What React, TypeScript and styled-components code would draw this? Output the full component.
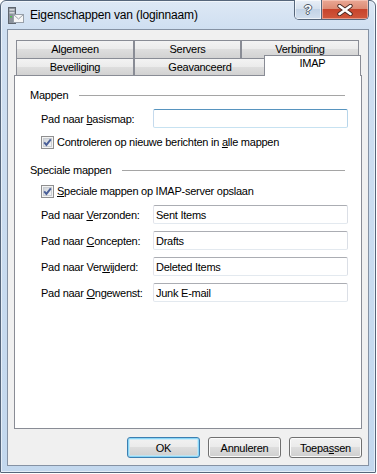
import React from 'react';
import styled, {createGlobalStyle, css} from 'styled-components';

const FONT = `"Liberation Sans", Arial, sans-serif`;

const fields = [
  {pre: 'Pad naar ', key: 'V', post: 'erzonden:', value: 'Sent Items'},
  {pre: 'Pad naar ', key: 'C', post: 'oncepten:', value: 'Drafts'},
  {pre: 'Pad naar Ver', key: 'w', post: 'ijderd:', value: 'Deleted Items'},
  {pre: 'Pad naar ', key: 'O', post: 'ngewenst:', value: 'Junk E-mail'},
];

function AppIcon() {
  return (
    <IconSvg width="16" height="17" viewBox="0 0 16 17">
      <rect x="0.5" y="0.5" width="7" height="16" fill="#8c939c" stroke="#5f666f" />
      <rect x="1.5" y="2" width="5" height="1.5" fill="#d5d9de" />
      <rect x="1.5" y="5" width="5" height="1.5" fill="#d5d9de" />
      <rect x="2" y="9" width="2" height="1.5" fill="#4fbf4a" />
      <rect x="5.5" y="7.5" width="10" height="8" fill="#f6f6f6" stroke="#98a0aa" />
      <path d="M5.5 7.5 L10.5 12 L15.5 7.5" fill="none" stroke="#98a0aa" />
    </IconSvg>
  );
}

function CheckBox() {
  return (
    <CheckSvg width="13" height="13" viewBox="0 0 13 13">
      <defs>
        <linearGradient id="cbFill" x1="0" y1="0" x2="1" y2="1">
          <stop offset="0" stopColor="#cdd1d6" />
          <stop offset="1" stopColor="#f8f8f8" />
        </linearGradient>
      </defs>
      <rect x="0.5" y="0.5" width="12" height="12" fill="#f4f4f4" stroke="#8f8f8f" />
      <rect x="2.5" y="2.5" width="8" height="8" fill="url(#cbFill)" stroke="#c9cdd2" />
      <path d="M3.2 6.4 L5.4 8.9 L9.8 3.4" fill="none" stroke="#4a5f98" strokeWidth="1.9" />
    </CheckSvg>
  );
}

function App() {
  return (
    <>
      <GlobalStyle />
      <Window>
        <TitleBar>
          <AppIcon />
          <Title>Eigenschappen van (loginnaam)</Title>
          <Controls>
            <HelpButton>?</HelpButton>
            <CloseButton>
              <svg width="16" height="12" viewBox="0 0 16 12">
                <path d="M2.5 2 L13.5 10 M13.5 2 L2.5 10" stroke="#4a2a24" strokeWidth="4.4" strokeLinecap="round" />
                <path d="M2.5 2 L13.5 10 M13.5 2 L2.5 10" stroke="#ffffff" strokeWidth="2.6" strokeLinecap="round" />
              </svg>
            </CloseButton>
          </Controls>
        </TitleBar>

        <Client>
          <TabRow $cols="118px 107px 1fr" $h={18}>
            <Tab>Algemeen</Tab>
            <Tab>Servers</Tab>
            <Tab>Verbinding</Tab>
          </TabRow>
          <TabRow $cols="118px 132px 1fr" $h={17}>
            <Tab>Beveiliging</Tab>
            <Tab>Geavanceerd</Tab>
            <Tab $selected>IMAP</Tab>
          </TabRow>

          <Pane>
            <GroupHeader>
              Mappen
              <GroupLine />
            </GroupHeader>
            <FieldRow $mt={7}>
              <FieldLabel>Pad naar <Key>b</Key>asismap:</FieldLabel>
              <TextBox $focus readOnly value="" />
            </FieldRow>
            <CheckRow $mt={8}>
              <CheckBox />
              <span>Controleren op nieuwe berichten in <Key>a</Key>lle mappen</span>
            </CheckRow>

            <GroupHeader style={{marginTop: 14}}>
              Speciale mappen
              <GroupLine />
            </GroupHeader>
            <CheckRow $mt={8}>
              <CheckBox />
              <span><Key>S</Key>peciale mappen op IMAP-server opslaan</span>
            </CheckRow>
            {fields.map((f, i) => (
              <FieldRow key={i} $mt={7}>
                <FieldLabel>{f.pre}<Key>{f.key}</Key>{f.post}</FieldLabel>
                <TextBox readOnly value={f.value} />
              </FieldRow>
            ))}
          </Pane>

          <ButtonRow>
            <Button $default>OK</Button>
            <Button>Annuleren</Button>
            <Button>Toepa<Key>s</Key>sen</Button>
          </ButtonRow>
        </Client>
      </Window>
    </>
  );
}

export default App;

const GlobalStyle = createGlobalStyle`
  html, body {
    margin: 0;
    background: #ffffff;
  }
  body {
    font-family: ${FONT};
  }
`;

const Window = styled.div`
  box-sizing: border-box;
  width: 376px;
  height: 473px;
  border: 1px solid #56667b;
  border-radius: 6px 6px 1px 1px;
  background: linear-gradient(to bottom, #dde8f5 0px, #cfdff1 28px, #c3d8ee 100%);
  box-shadow: inset 0 0 0 1px rgba(255, 255, 255, 0.55);
  padding: 0 6px 6px 6px;
  display: flex;
  flex-direction: column;
`;

const TitleBar = styled.div`
  height: 28px;
  display: flex;
  align-items: flex-start;
`;

const IconSvg = styled.svg`
  margin: 6px 0 0 1px;
  flex-shrink: 0;
`;

const Title = styled.div`
  margin-left: 6px;
  line-height: 28px;
  font-size: 12px;
  letter-spacing: -0.15px;
  color: #000000;
`;

const Controls = styled.div`
  margin-left: auto;
  margin-top: -1px;
  display: flex;
  height: 19px;
  border: 1px solid #56667b;
  border-top: none;
  border-radius: 0 0 5px 5px;
  overflow: hidden;
`;

const HelpButton = styled.div`
  width: 26px;
  display: flex;
  align-items: center;
  justify-content: center;
  border-right: 1px solid #56667b;
  background: linear-gradient(to bottom, #e9eff7 0%, #d6e1ee 45%, #c3d3e6 50%, #d2dfee 100%);
  box-shadow: inset 0 0 0 1px rgba(255, 255, 255, 0.6);
  font: bold 13px ${FONT};
  color: #ffffff;
  text-shadow: 1px 0 #4d5866, -1px 0 #4d5866, 0 1px #4d5866, 0 -1px #4d5866;
`;

const CloseButton = styled.div`
  width: 46px;
  display: flex;
  align-items: center;
  justify-content: center;
  background: linear-gradient(to bottom, #eaa895 0%, #dd8c75 45%, #c7442c 50%, #d0583c 100%);
  box-shadow: inset 0 0 0 1px rgba(255, 220, 210, 0.5);
`;

const Client = styled.div`
  flex: 1;
  border: 1px solid #8592a4;
  background: #f0f0f0;
  padding: 10px 6px 7px 6px;
  display: flex;
  flex-direction: column;
`;

const TabRow = styled.div<{$cols: string; $h: number}>`
  display: grid;
  grid-template-columns: ${p => p.$cols};
  height: ${p => p.$h}px;
  padding: 0 3px 0 2px;
`;

const Tab = styled.div<{$selected?: boolean}>`
  box-sizing: border-box;
  border: 1px solid #898c95;
  border-bottom: none;
  background: linear-gradient(to bottom, #f3f3f3 0%, #ebebeb 50%, #dedede 50%, #d2d2d2 100%);
  display: flex;
  align-items: center;
  justify-content: center;
  font-size: 11px;
  line-height: 13px;
  letter-spacing: -0.25px;
  color: #000000;
  ${p => p.$selected && css`
    background: #ffffff;
    margin: -3px -2px -1px -2px;
    position: relative;
    z-index: 1;
    align-items: flex-start;
    padding-top: 1px;
  `}
`;

const Pane = styled.div`
  flex: 1;
  background: #ffffff;
  border: 1px solid #898c95;
  padding: 12px 13px 0 15px;
  display: flex;
  flex-direction: column;
  font-size: 11px;
  letter-spacing: -0.25px;
  color: #000000;
`;

const GroupHeader = styled.div`
  height: 14px;
  line-height: 14px;
  display: flex;
  align-items: center;
`;

const GroupLine = styled.div`
  flex: 1;
  height: 1px;
  background: #a5a5a5;
  margin: 0 3px 0 11px;
`;

const FieldRow = styled.div<{$mt: number}>`
  margin-top: ${p => p.$mt}px;
  padding-left: 11px;
  height: 19px;
  display: flex;
  align-items: center;
`;

const FieldLabel = styled.div`
  width: 112px;
  flex-shrink: 0;
`;

const TextBox = styled.input<{$focus?: boolean}>`
  flex: 1;
  min-width: 0;
  box-sizing: border-box;
  height: 19px;
  margin: 0;
  padding: 0 2px;
  border: 1px solid;
  border-color: #abadb3 #dbdfe6 #e3e9ef #e2e3ea;
  border-radius: 2px;
  background: #ffffff;
  font: 11px ${FONT};
  letter-spacing: -0.25px;
  color: #000000;
  outline: none;
  ${p => p.$focus && css`
    border-color: #5794bf #b7d5ea #c7e2f1 #c5daed;
  `}
`;

const CheckRow = styled.div<{$mt: number}>`
  margin-top: ${p => p.$mt}px;
  padding-left: 11px;
  height: 13px;
  display: flex;
  align-items: center;
  gap: 3px;
  line-height: 13px;
`;

const CheckSvg = styled.svg`
  flex-shrink: 0;
`;

const Key = styled.span`
  text-decoration: underline;
`;

const ButtonRow = styled.div`
  margin-top: 8px;
  display: flex;
  justify-content: flex-end;
  gap: 8px;
`;

const Button = styled.button<{$default?: boolean}>`
  width: 73px;
  height: 21px;
  box-sizing: border-box;
  margin: 0;
  padding: 0;
  border: 1px solid #707070;
  border-radius: 3px;
  background: linear-gradient(to bottom, #f2f2f2 0%, #ebebeb 45%, #dddddd 50%, #cfcfcf 100%);
  box-shadow: inset 0 0 0 1px #fbfbfb;
  font: 11px ${FONT};
  letter-spacing: -0.25px;
  color: #000000;
  ${p => p.$default && css`
    border-color: #3c7fb1;
    box-shadow: inset 0 0 0 1px #8ad6f7, inset 0 0 0 2px rgba(190, 232, 250, 0.7);
  `}
`;
